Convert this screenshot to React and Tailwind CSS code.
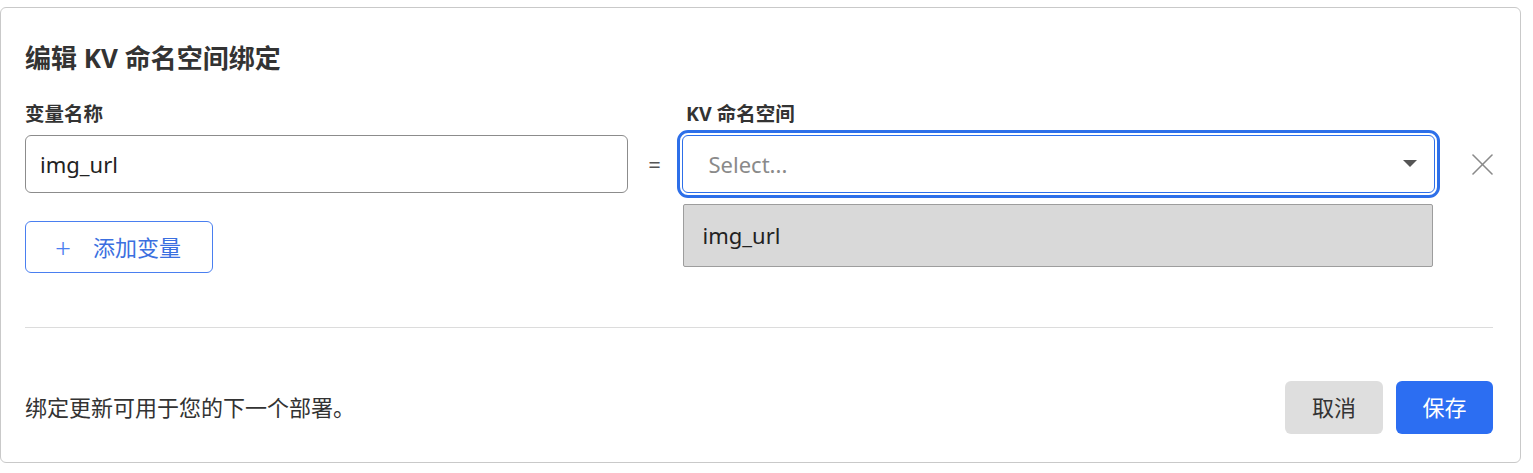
import { useState } from 'react';

const font = { fontFamily: '"Noto Sans", "Noto Sans CJK SC", sans-serif' };

function Caret() {
  return (
    <svg width="14" height="8" viewBox="0 0 14 8">
      <path d="M0 0 L14 0 L7 7 Z" fill="#555" />
    </svg>
  );
}

function CloseIcon() {
  return (
    <svg width="21" height="21" viewBox="0 0 21 21" fill="none" stroke="#8a8a8a" strokeWidth="1.6" strokeLinecap="round">
      <line x1="1" y1="1" x2="20" y2="20" />
      <line x1="20" y1="1" x2="1" y2="20" />
    </svg>
  );
}

export default function App() {
  const [name, setName] = useState('img_url');

  return (
    <div className="bg-white min-h-[473px] pt-[7px]" style={font}>
      <div className="w-[1521px] rounded-md border border-[#c9c9c9] bg-white pl-6 pr-[27px] pt-[33px] pb-[28px]">
        {/* Title */}
        <h1 className="text-[26px] leading-[34px] font-bold text-[#333]">编辑 KV 命名空间绑定</h1>

        {/* Labels */}
        <div className="flex mt-[26px] text-[19.5px] leading-[26px] font-bold text-[#333]">
          <div className="w-[603px]">变量名称</div>
          <div className="w-[54px]" />
          <div className="pl-[4px]">KV 命名空间</div>
        </div>

        {/* Inputs row */}
        <div className="flex items-center mt-2">
          <input
            value={name}
            onChange={(e) => setName(e.target.value)}
            className="w-[603px] h-[58px] rounded-md border border-[#8c8c8c] px-[14px] text-[22px] text-[#222] outline-none"
          />
          <div className="w-[54px] text-center text-[22px] text-[#555]">=</div>
          <div className="relative w-[754px]">
            <div className="h-[58px] rounded-md border border-[#2d6fe9] outline-[3px] outline-solid outline-[#2d6fe9] outline-offset-2 flex items-center justify-between pl-[26px] pr-[17px]">
              <span className="text-[22px] text-[#8a8a8a]">Select...</span>
              <Caret />
            </div>
            <div className="absolute left-[1px] top-[69px] w-[750px] h-[63px] bg-[#d9d9d9] border border-[#9d9d9d] rounded-[2px] flex items-center pl-[19px] text-[22px] text-[#222]">
              img_url
            </div>
          </div>
          <div className="ml-[37px] flex items-center">
            <CloseIcon />
          </div>
        </div>

        {/* Add variable */}
        <button className="mt-[28px] w-[188px] h-[52px] rounded-md border border-[#4a7ff0] flex items-center pl-[29px] text-[22px] text-[#3b6fe0]">
          <span className="text-[28px] leading-none font-light text-[#4a7ff0] mr-[22px]">+</span>
          添加变量
        </button>

        <div className="mt-[54px] h-px bg-[#dcdcdc]" />

        {/* Footer */}
        <div className="mt-[53px] flex items-center justify-between">
          <p className="text-[22px] text-[#333]">绑定更新可用于您的下一个部署。</p>
          <div className="flex gap-[13px]">
            <button className="w-[98px] h-[53px] rounded-md bg-[#dedede] text-[22px] text-[#333]">取消</button>
            <button className="w-[97px] h-[53px] rounded-md bg-[#2c6ef2] text-[22px] text-white">保存</button>
          </div>
        </div>
      </div>
    </div>
  );
}
